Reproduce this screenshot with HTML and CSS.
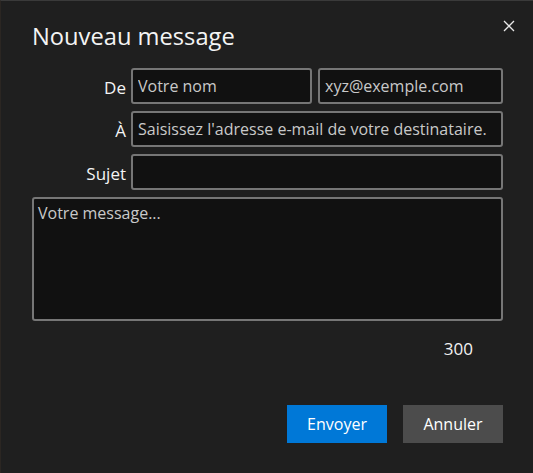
FILE: index.html
```html
<!DOCTYPE html>
<html lang="fr">
<head>
<meta charset="utf-8">
<title>Nouveau message</title>
<link rel="stylesheet" href="styles.css">
</head>
<body>
<div class="dialog">
  <button class="close" aria-label="Fermer">
    <svg width="12" height="12" viewBox="0 0 12 12"><path d="M1 1 L11 11 M11 1 L1 11" stroke="#e8e8e8" stroke-width="1.3" fill="none"/></svg>
  </button>
  <h1 class="title">Nouveau message</h1>
  <div class="form">
    <label class="label">De</label>
    <div class="pair">
      <input class="field f-name" placeholder="Votre nom">
      <input class="field f-mail" placeholder="xyz@exemple.com">
    </div>
    <label class="label">À</label>
    <input class="field" placeholder="Saisissez l'adresse e-mail de votre destinataire.">
    <label class="label">Sujet</label>
    <input class="field">
    <textarea class="message" placeholder="Votre message..."></textarea>
  </div>
  <div class="counter">300</div>
  <div class="actions">
    <button class="btn primary">Envoyer</button>
    <button class="btn secondary">Annuler</button>
  </div>
</div>
</body>
</html>
```

FILE: styles.css
```css
html, body {
  margin: 0;
  padding: 0;
  background: #1f1f1f;
}
.dialog {
  position: relative;
  box-sizing: border-box;
  width: 533px;
  height: 473px;
  padding: 20px 30px 0 31px;
  background: #1f1f1f;
  border-top: 1px solid #3a3a3a;
  border-left: 1px solid #2b2622;
  font-family: "Open Sans", "Noto Sans", sans-serif;
  color: #f2f2f2;
}
.close {
  position: absolute;
  top: 19px;
  right: 18px;
  width: 12px;
  height: 12px;
  padding: 0;
  border: 0;
  background: none;
  display: flex;
}
.title {
  margin: -1px 0 0 0;
  font-size: 23.7px;
  font-weight: 400;
  line-height: 32px;
  color: #f4f4f4;
}
.form {
  margin-top: 16px;
  display: grid;
  grid-template-columns: 94px 1fr;
  column-gap: 5px;
  row-gap: 7px;
}
.label {
  font-size: 17px;
  text-align: right;
  line-height: 33px;
  padding-top: 3px;
  height: 36px;
  box-sizing: border-box;
  color: #f4f4f4;
}
.pair {
  display: grid;
  grid-template-columns: 181fr 185fr;
  column-gap: 6px;
}
.field, .message {
  box-sizing: border-box;
  height: 36px;
  width: 100%;
  margin: 0;
  padding: 0 5px;
  background: #111111;
  border: 2px solid #767676;
  border-radius: 3px;
  font-family: inherit;
  font-size: 16px;
  color: #f2f2f2;
  outline: none;
}
.field::placeholder, .message::placeholder {
  color: #c9c9c9;
  opacity: 1;
}
.message {
  grid-column: 1 / 3;
  height: 124px;
  padding: 3px 4px;
  resize: none;
  line-height: 22px;
}
.counter {
  margin-top: 16px;
  padding-right: 30px;
  text-align: right;
  font-size: 17px;
  line-height: 24px;
  color: #f2f2f2;
}
.actions {
  margin-top: 44px;
  display: flex;
  justify-content: flex-end;
  gap: 16px;
}
.btn {
  width: 100px;
  height: 38px;
  border: 0;
  border-radius: 0;
  font-family: inherit;
  font-size: 16px;
  color: #ffffff;
  padding: 0;
}
.primary { background: #0078d7; }
.secondary { background: #4c4c4c; }
```
